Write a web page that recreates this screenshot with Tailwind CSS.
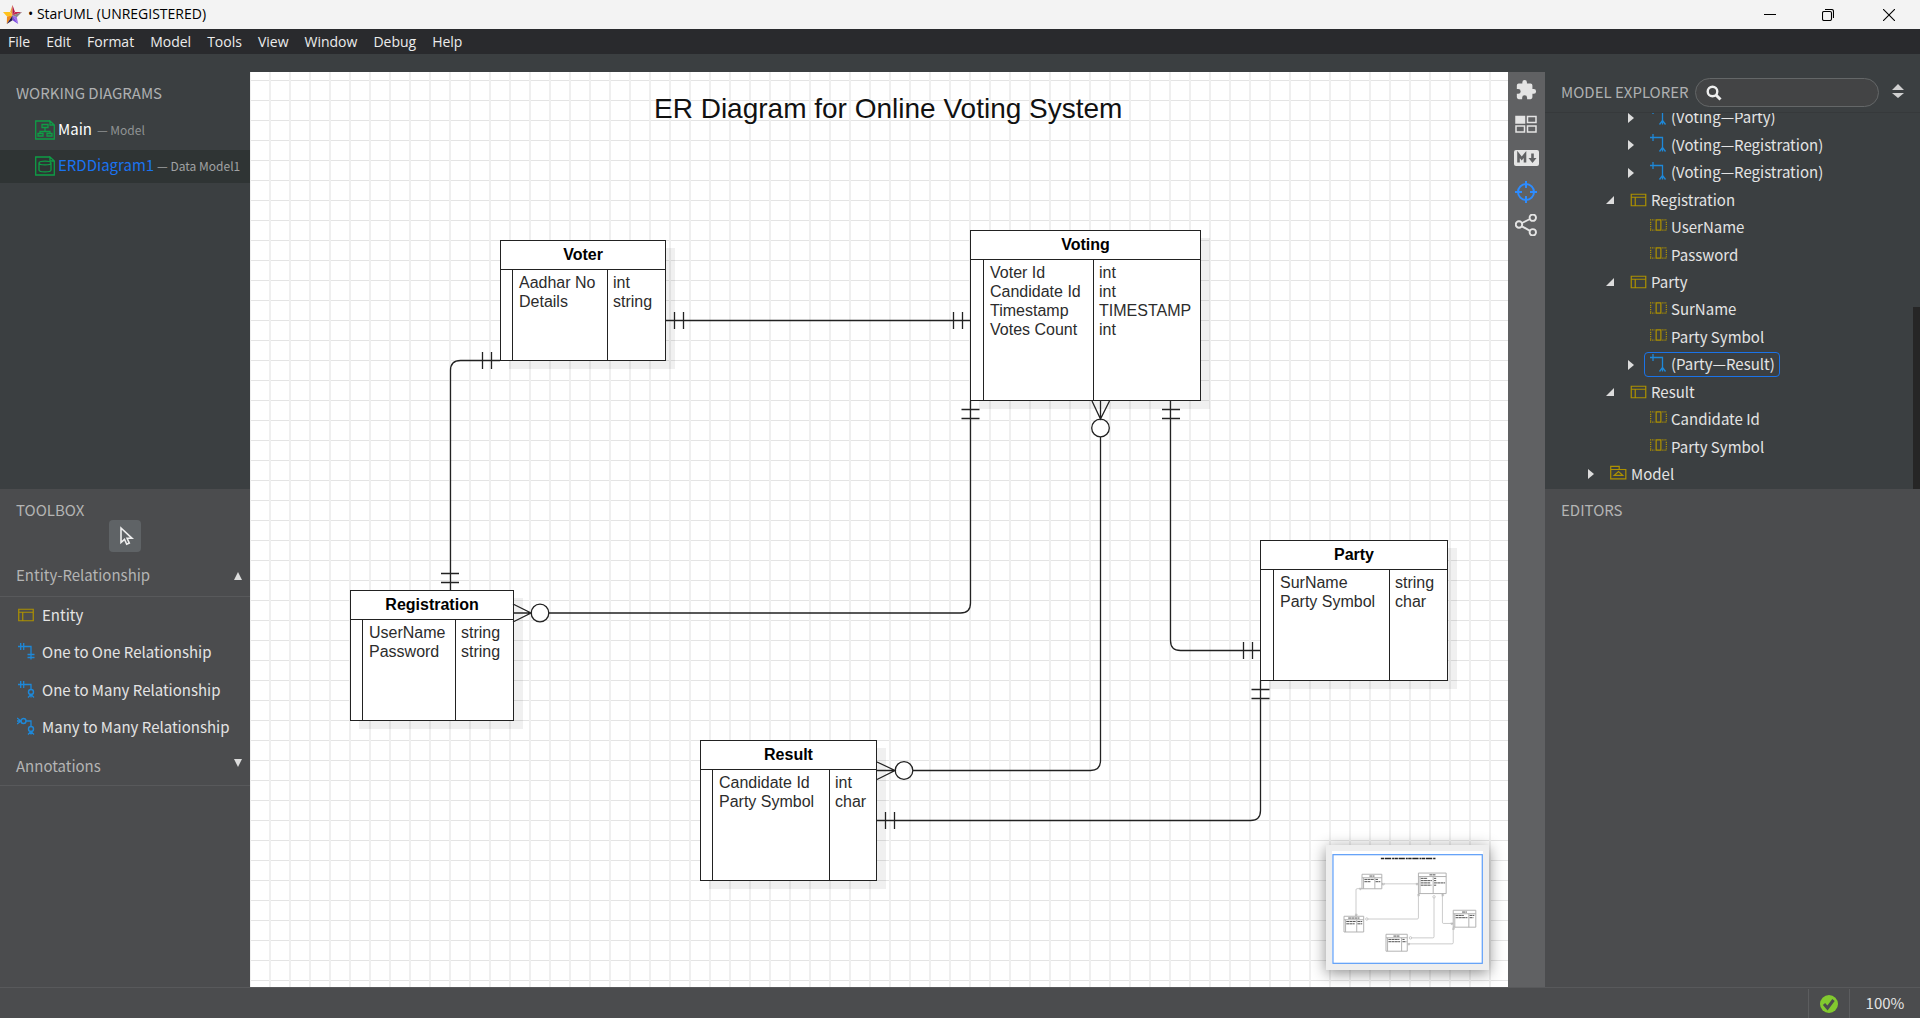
<!DOCTYPE html>
<html lang="en">
<head>
<meta charset="utf-8">
<title>StarUML (UNREGISTERED)</title>
<script src="https://cdn.jsdelivr.net/npm/@tailwindcss/browser@4"></script>
</head>
<body class="flex h-screen flex-col overflow-hidden bg-[#3b3f41] font-['Noto_Sans_CJK_SC',sans-serif] text-[15px] text-[#e4e4e4]">

<svg class="hidden" aria-hidden="true">
  <symbol id="entity" viewBox="0 0 16 16"><path d="M.75 2.25h14.5v11.5H.75zM.75 5.25h14.5M4.75 5.25v8.5" fill="none" stroke="#ad9100" stroke-width="1.2"/></symbol>
  <symbol id="column" viewBox="0 0 18 16"><path d="M6.500 2.500h5v11h-5z" fill="none" stroke="#ad9100" stroke-width="1.300"/><path d="M0 2.500h5M0 13.500h5M.7 4.500v8M13 2.500h5M13 13.500h5M17.300 4.500v8" fill="none" stroke="#ad9100" stroke-width="1.300" stroke-dasharray="1.300 1"/></symbol>
  <symbol id="rel" viewBox="0 0 17 20"><path d="M0 4.500h12.500v14M3 1v7M12.500 14.500l-3 4M12.500 14.500l3 4" fill="none" stroke="#1e88d8" stroke-width="1.300"/></symbol>
  <symbol id="one-one" viewBox="0 0 18 18"><path d="M1 4.500h13v13M3.700 1v7M6.700 1v7M10.500 12.500h7M10.500 15.500h7" fill="none" stroke="#1e88d8" stroke-width="1.300"/></symbol>
  <symbol id="one-many" viewBox="0 0 18 18"><path d="M1 4.500h13v5M3.700 1v7M6.700 1v7M11 17.500l3-3 3 3M14 14.500v3" fill="none" stroke="#1e88d8" stroke-width="1.300"/><circle cx="14" cy="12" r="2.500" fill="none" stroke="#1e88d8" stroke-width="1.400"/></symbol>
  <symbol id="many-many" viewBox="0 0 18 18"><path d="M9 4h5v5M0 1l4 3-4 3M0 4h4M11 17.500l3-3 3 3M14 14.500v3" fill="none" stroke="#1e88d8" stroke-width="1.300"/><circle cx="14" cy="12" r="2.500" fill="none" stroke="#1e88d8" stroke-width="1.400"/><circle cx="6.500" cy="4" r="2.500" fill="none" stroke="#1e88d8" stroke-width="1.400"/></symbol>
  <symbol id="closed" viewBox="0 0 8 10"><path d="M1 0l6 5-6 5z" fill="#dcdcdc"/></symbol>
  <symbol id="open" viewBox="0 0 8 8"><path d="M8 0v8H0z" fill="#dcdcdc"/></symbol>
  <symbol id="model" viewBox="0 0 18 16"><path d="M.75 14.200V1h9v3.300h7v9.900zM.75 4.300h9" fill="none" stroke="#ad9100" stroke-width="1.300"/><path d="M4.500 10.500h9l-4.500-4z" fill="none" stroke="#ad9100" stroke-width="1.300"/></symbol>
</svg>

<header class="flex h-[29px] shrink-0 items-center bg-[#f3f3f3] pl-[3px] font-['Open_Sans',sans-serif] text-sm text-black">
  <svg class="h-[19px] w-[19px]" viewBox="0 0 20 20"><path d="M10 0l-2.400 7L10 11z" fill="#e8a33a"/><path d="M10 0l2.500 7L10 11z" fill="#b5174b"/><path d="M0 7.300h7.500L10 11l-5.800 1z" fill="#ffc21c"/><path d="M4.200 12L10 11l-6 9z" fill="#f08a1c"/><path d="M20 7.300h-7.500L10 11z" fill="#c3284f"/><path d="M20 7.300L10 11l4.500 2z" fill="#888"/><path d="M14.500 12.500L10 11l6 9z" fill="#9d6be8"/><path d="M10 11l6 9-6-4z" fill="#7a4ae0"/><path d="M10 11l-6 9 6-4z" fill="#271c50"/></svg>
  <h1 class="ml-1.5 flex-1 pb-px whitespace-nowrap">• StarUML (UNREGISTERED)</h1>
  <div class="flex h-full">
    <button aria-label="Minimize" class="flex w-[58px] items-center justify-center"><svg class="h-3 w-3" viewBox="0 0 12 12"><path d="M0 5.500h12" stroke="#000"/></svg></button>
    <button aria-label="Restore" class="flex w-[58px] items-center justify-center"><svg class="h-3 w-3" viewBox="0 0 12 12" fill="none" stroke="#000" stroke-width="1.100"><rect x=".5" y="2.500" width="9" height="9" rx="1.500"/><path d="M3 .5h6.500a2 2 0 0 1 2 2V9"/></svg></button>
    <button aria-label="Close" class="flex w-[63px] items-center justify-center"><svg class="h-3 w-3" viewBox="0 0 12 12"><path d="M0 0l12 12M12 0L0 12" stroke="#000" stroke-width="1.100"/></svg></button>
  </div>
</header>

<nav class="flex h-[25px] shrink-0 items-center gap-4 bg-[#292a2d] pl-2 font-['Open_Sans',sans-serif] text-sm text-[#ececec]">
  <button>File</button><button>Edit</button><button>Format</button><button>Model</button><button>Tools</button><button>View</button><button>Window</button><button>Debug</button><button>Help</button>
</nav>

<div class="flex min-h-0 flex-1 pt-[18px]">
  <aside class="flex w-[250px] shrink-0 flex-col">
    <section class="h-[417px] shrink-0">
      <h2 class="flex h-[42px] items-center pl-4 text-[#aeb0b1]">WORKING DIAGRAMS</h2>
      <ul class="flex flex-col gap-[3px]">
        <li class="flex h-[33px] items-center gap-[3px] pb-0.5 pl-[35px]">
          <svg class="h-5 w-5 shrink-0" viewBox="0 0 20 20" fill="none" stroke="#0f9d46" stroke-width="1.300"><path d="M15 1H.7v18h18.600V5M15 1v4h4.300zM7 4.500h6v3H7zM10 7.500v4M5 13.500v-2h10v2M3 13.500h5v2.500H3zM12 13.500h5v2.500h-5z"/></svg>
          <span class="text-white">Main</span><span class="ml-0.5 text-xs text-[#909394]">— Model</span>
        </li>
        <li class="flex h-[33px] items-center gap-[3px] whitespace-nowrap bg-[#2f3434] pb-0.5 pl-[35px]">
          <svg class="h-5 w-5 shrink-0" viewBox="0 0 20 20" fill="none" stroke="#0f9d46" stroke-width="1.300"><path d="M15 1H.7v18h18.600V5M15 1v4h4.300z"/><path d="M4 7c0-2.500 12-2.500 12 0s-12 2.500-12 0v7c0 2.500 12 2.500 12 0V7"/></svg>
          <span class="text-[#1a73f0]">ERDDiagram1</span><span class="text-xs text-[#a0a2a3]">— Data Model1</span>
        </li>
      </ul>
    </section>
    <section class="flex-1 bg-[#4b4c4e]">
      <h2 class="flex h-[31px] items-end pl-4 leading-5 text-[#b4b4b4]">TOOLBOX</h2>
      <button aria-label="Select" class="mx-auto flex h-8 w-8 items-center justify-center rounded bg-[#5f6366]">
        <svg class="h-5 w-5" viewBox="0 0 20 20" fill="none" stroke="#eee" stroke-width="1.600"><path d="M6 2v14.500l3.500-3.200 2.200 5 2.600-1.200-2.200-4.800H17z"/></svg>
      </button>
      <button class="mt-[7px] flex h-[38px] w-full items-center justify-between border-b border-[#58595b] pr-2 pb-1 pl-4 text-[#b4b4b4]">Entity-Relationship<svg class="h-2 w-2" viewBox="0 0 8 8"><path d="M4 0l4 8H0z" fill="#dcdcdc"/></svg></button>
      <ul class="grid h-[150px] grid-rows-4">
        <li class="flex items-center gap-2 pb-0.5 pl-[18px]"><svg class="h-4 w-4"><use href="#entity"/></svg>Entity</li>
        <li class="flex items-center gap-[7px] pb-0.5 pl-[17px]"><svg class="mb-0.5 h-[18px] w-[18px]"><use href="#one-one"/></svg>One to One Relationship</li>
        <li class="flex items-center gap-[7px] pb-0.5 pl-[17px]"><svg class="mb-0.5 h-[18px] w-[18px]"><use href="#one-many"/></svg>One to Many Relationship</li>
        <li class="flex items-center gap-[7px] pb-0.5 pl-[17px]"><svg class="mb-0.5 h-[18px] w-[18px]"><use href="#many-many"/></svg>Many to Many Relationship</li>
      </ul>
      <button class="flex h-[39px] w-full items-center justify-between border-b border-[#58595b] pr-2 pl-4 text-[#b4b4b4]">Annotations<svg class="mb-1.5 h-2 w-2" viewBox="0 0 8 8"><path d="M4 8l4-8H0z" fill="#dcdcdc"/></svg></button>
    </section>
  </aside>

  <main class="relative min-w-0 flex-1 overflow-hidden bg-white bg-[linear-gradient(to_right,#efefef_2px,transparent_2px),linear-gradient(to_bottom,#e4e4e4_1px,transparent_1px)] bg-[size:20px_20px] bg-[position:19px_8px] font-['Liberation_Sans',Arial,sans-serif] text-base text-[#2c2c2c]">
    <h2 class="absolute top-[21px] left-[404px] whitespace-nowrap text-[28px] leading-8 text-[#111]">ER Diagram for Online Voting System</h2>

    <article class="absolute top-[168px] left-[250px] flex h-[121px] w-[166px] flex-col border border-[#222] bg-white shadow-[9px_8px_0_#0000000f]">
      <h3 class="flex h-[29px] shrink-0 items-center justify-center border-b border-[#222] font-bold text-black">Voter</h3>
      <div class="flex flex-1 leading-[19px]"><div class="w-[12px] border-r border-[#222]"></div><div class="w-[95px] border-r border-[#222] pt-[3px] pl-1.5">Aadhar No<br>Details</div><div class="pt-[3px] pl-[5px]">int<br>string</div></div>
    </article>
    <article class="absolute top-[158px] left-[720px] flex h-[171px] w-[231px] flex-col border border-[#222] bg-white shadow-[9px_8px_0_#0000000f]">
      <h3 class="flex h-[29px] shrink-0 items-center justify-center border-b border-[#222] font-bold text-black">Voting</h3>
      <div class="flex flex-1 leading-[19px]"><div class="w-[13px] border-r border-[#222]"></div><div class="w-[110px] border-r border-[#222] pt-[3px] pl-1.5">Voter Id<br>Candidate Id<br>Timestamp<br>Votes Count</div><div class="pt-[3px] pl-[5px]">int<br>int<br>TIMESTAMP<br>int</div></div>
    </article>
    <article class="absolute top-[518px] left-[100px] flex h-[131px] w-[164px] flex-col border border-[#222] bg-white shadow-[9px_8px_0_#0000000f]">
      <h3 class="flex h-[29px] shrink-0 items-center justify-center border-b border-[#222] font-bold text-black">Registration</h3>
      <div class="flex flex-1 leading-[19px]"><div class="w-[12px] border-r border-[#222]"></div><div class="w-[93px] border-r border-[#222] pt-[3px] pl-1.5">UserName<br>Password</div><div class="pt-[3px] pl-[5px]">string<br>string</div></div>
    </article>
    <article class="absolute top-[668px] left-[450px] flex h-[141px] w-[177px] flex-col border border-[#222] bg-white shadow-[9px_8px_0_#0000000f]">
      <h3 class="flex h-[29px] shrink-0 items-center justify-center border-b border-[#222] font-bold text-black">Result</h3>
      <div class="flex flex-1 leading-[19px]"><div class="w-[12px] border-r border-[#222]"></div><div class="w-[117px] border-r border-[#222] pt-[3px] pl-1.5">Candidate Id<br>Party Symbol</div><div class="pt-[3px] pl-[5px]">int<br>char</div></div>
    </article>
    <article class="absolute top-[468px] left-[1010px] flex h-[141px] w-[188px] flex-col border border-[#222] bg-white shadow-[9px_8px_0_#0000000f]">
      <h3 class="flex h-[29px] shrink-0 items-center justify-center border-b border-[#222] font-bold text-black">Party</h3>
      <div class="flex flex-1 leading-[19px]"><div class="w-[13px] border-r border-[#222]"></div><div class="w-[116px] border-r border-[#222] pt-[3px] pl-1.5">SurName<br>Party Symbol</div><div class="pt-[3px] pl-[5px]">string<br>char</div></div>
    </article>

    <svg class="pointer-events-none absolute inset-0 h-full w-full" fill="none" stroke="#222" stroke-width="1.300">
      <g id="connectors">
        <path d="M415 248.500H720M424.500 240v17M433.500 240v17M703.500 240v17M712.500 240v17"/>
        <path d="M250 288.500H210.500q-10 0-10 10V518M232.500 280v17M241.500 280v17M191 501.500h18M191 510.500h18"/>
        <path d="M720.500 329V531q0 10-10 10H299M711.500 337.500h18M711.500 346.500h18M263 532l18 9-18 9M263 541h18"/>
        <circle cx="290" cy="541" r="8.800"/>
        <path d="M850.500 365V688.500q0 10-10 10H663M842 329l8.500 18 9-18M850.500 329v18M627 690l18 8.500-18 9M627 698.500h18"/>
        <circle cx="850.500" cy="356" r="8.800"/><circle cx="654" cy="698.500" r="8.800"/>
        <path d="M920.500 329V568.500q0 10 10 10H1010M912 337.500h18M912 346.500h18M993.500 570v17M1002.500 570v17"/>
        <path d="M1010.500 609V738.500q0 10-10 10H627M1001.500 617.500h18M1001.500 626.500h18M635.500 740v17M644.500 740v17"/>
      </g>
    </svg>

    <div class="absolute right-[19px] bottom-[17px] border-[6px] border-[#eee] bg-white pt-[3px] shadow-[0_3px_14px_#00000073]">
      <svg class="block h-[110px] w-[151px]" viewBox="0 0 1258 915" fill="none">
        <g stroke="#aaa" stroke-width="5">
          <path d="M415 248H720M250 288H210q-10 0-10 10V518M720 329V531q0 10-10 10H299M850 365V688q0 10-10 10H663M920 329V568q0 10 10 10H1010M1010 609V738q0 10-10 10H627"/>
          <path d="M420 240v17h14v-17M703 240v17h10v-17M232 280v17h10v-17M191 501h18v10h-18M711 337h18v10h-18M912 337h18v10h-18M993 570v17h10v-17M1001 617h18v10h-18M635 740v17h10v-17"/>
          <circle cx="290" cy="541" r="10"/><circle cx="850" cy="356" r="10"/><circle cx="654" cy="698" r="10"/>
        </g>
        <path stroke="#b0b0b0" stroke-width="8" d="M250 168h165v121H250zM250 197h165M263 197v92M357 197v92M720 158h231v171H720zM720 187h231M733 187v142M843 187v142M100 518h164v131H100zM100 547h164M113 547v102M206 547v102M450 668h177v141H450zM450 697h177M463 697v112M580 697v112M1010 468h188v141h-188zM1010 497h188M1023 497v112M1140 497v112"/>
        <path stroke="#333" stroke-width="7" stroke-dasharray="24 3" d="M312 183h42M270 211h80M270 230h50M363 211h20M363 230h40M812 173h50M740 202h55M740 221h92M740 240h80M740 259h88M850 202h18M850 221h18M850 240h92M850 259h18M135 533h94M119 562h78M119 581h70M212 562h40M212 581h40M512 683h50M470 711h92M470 730h98M587 711h18M587 730h32M1084 483h40M1030 511h68M1030 530h98M1146 511h40M1146 530h32"/>
        <path stroke="#222" stroke-width="13" stroke-dasharray="28 6 52 8 16 4" d="M407 37h459"/>
        <rect x="8" y="5" width="1244" height="905" stroke="#5a9cf8" stroke-width="10"/>
      </svg>
    </div>
  </main>

  <div class="flex w-[37px] shrink-0 flex-col items-center gap-3 bg-[#606163] pt-[7px] pr-px text-[#e4e4e4]">
    <button aria-label="Extensions" class="h-[22px] w-[22px]"><svg viewBox="0 0 24 24" fill="currentColor"><path d="M20.500 11H19V7a2 2 0 0 0-2-2h-4V3.500a2.500 2.500 0 0 0-5 0V5H4a2 2 0 0 0-2 2v3.800h1.500a2.700 2.700 0 0 1 0 5.400H2V20a2 2 0 0 0 2 2h3.800v-1.500a2.700 2.700 0 0 1 5.400 0V22H17a2 2 0 0 0 2-2v-4h1.500a2.500 2.500 0 0 0 0-5z"/></svg></button>
    <button aria-label="Diagram thumbnails" class="h-[22px] w-[22px]"><svg viewBox="0 0 22 22" fill="none" stroke="currentColor" stroke-width="1.500"><path fill="currentColor" d="M1 3.500h8.500V10H1z"/><path d="M12.500 3.500H21V9.500h-8.500zM1 13h8.500v6H1zM12.500 13H21v6h-8.500z"/></svg></button>
    <button aria-label="Documentation" class="h-[22px] w-[25px]"><svg viewBox="0 0 25 22"><rect x="0" y="3" width="25" height="16" rx="2" fill="currentColor"/><path d="M4.500 15.500v-8l3.200 4 3.300-4v8M18.500 6.500v5" fill="none" stroke="#606163" stroke-width="2.600"/><path d="M14.500 11h8l-4 5z" fill="#606163"/></svg></button>
    <button aria-label="Navigator" class="h-[22px] w-[22px] text-[#2d8cff]"><svg viewBox="0 0 22 22" fill="none" stroke="currentColor" stroke-width="2"><circle cx="11" cy="11" r="8"/><path d="M11 0v7M11 15v7M0 11h7M15 11h7"/></svg></button>
    <button aria-label="Relationships" class="-mt-px h-[22px] w-[22px]"><svg viewBox="0 0 22 22" fill="none" stroke="currentColor" stroke-width="1.900"><circle cx="4" cy="10.500" r="3.200"/><circle cx="17.800" cy="3.700" r="3.200"/><circle cx="17.800" cy="18.300" r="3.200"/><path d="M7 9l8-4M7 12.300l8 4.500"/></svg></button>
  </div>

  <aside class="flex min-h-0 w-[375px] shrink-0 flex-col">
    <div class="flex h-[41px] shrink-0 items-center border-b border-[#36393b] px-4">
      <h2 class="flex-1 whitespace-nowrap text-[#aeb0b1]">MODEL EXPLORER</h2>
      <label class="relative">
        <svg class="absolute top-[7px] left-[11px] h-4 w-4" viewBox="0 0 16 16" fill="none" stroke="#eee"><circle cx="6.500" cy="6.500" r="4.800" stroke-width="2.400"/><path d="M10 10l4.500 4.500" stroke-width="3"/></svg>
        <input aria-label="Search" type="search" class="block h-[29px] w-[184px] rounded-full border border-[#646768] bg-[#434445] pl-8 outline-none">
      </label>
      <button aria-label="Sort" class="ml-[13px] h-4 w-3"><svg viewBox="0 0 12 16" fill="#d0d0d0"><path d="M6 0l6 6H0zM6 14l6-5H0z"/></svg></button>
    </div>
    <div class="flex h-[376px] shrink-0 overflow-hidden">
      <ul class="grid h-[384px] flex-1 grid-rows-14 self-end whitespace-nowrap [&>li]:pb-0.5">
        <li class="flex items-center pl-[82px]"><svg class="mr-[15px] h-[10px] w-2"><use href="#closed"/></svg><svg class="mr-1 mb-1 h-5 w-[17px]"><use href="#rel"/></svg>(Voting—Party)</li>
        <li class="flex items-center pl-[82px]"><svg class="mr-[15px] h-[10px] w-2"><use href="#closed"/></svg><svg class="mr-1 mb-1 h-5 w-[17px]"><use href="#rel"/></svg>(Voting—Registration)</li>
        <li class="flex items-center pl-[82px]"><svg class="mr-[15px] h-[10px] w-2"><use href="#closed"/></svg><svg class="mr-1 mb-1 h-5 w-[17px]"><use href="#rel"/></svg>(Voting—Registration)</li>
        <li class="flex items-center pl-[61px]"><svg class="mr-4 h-2 w-2"><use href="#open"/></svg><svg class="mr-1 h-4 w-[17px]"><use href="#entity"/></svg>Registration</li>
        <li class="flex items-center pl-[105px]"><svg class="mr-1 mb-1 h-4 w-[17px]"><use href="#column"/></svg>UserName</li>
        <li class="flex items-center pl-[105px]"><svg class="mr-1 mb-1 h-4 w-[17px]"><use href="#column"/></svg>Password</li>
        <li class="flex items-center pl-[61px]"><svg class="mr-4 h-2 w-2"><use href="#open"/></svg><svg class="mr-1 h-4 w-[17px]"><use href="#entity"/></svg>Party</li>
        <li class="flex items-center pl-[105px]"><svg class="mr-1 mb-1 h-4 w-[17px]"><use href="#column"/></svg>SurName</li>
        <li class="flex items-center pl-[105px]"><svg class="mr-1 mb-1 h-4 w-[17px]"><use href="#column"/></svg>Party Symbol</li>
        <li class="flex items-center pl-[82px]"><svg class="mr-[9px] h-[10px] w-2"><use href="#closed"/></svg><span class="flex h-[25px] items-center rounded border border-[#1a73e8] pr-1 pl-[5px]"><svg class="mr-1 mb-1 h-5 w-[17px]"><use href="#rel"/></svg>(Party—Result)</span></li>
        <li class="flex items-center pl-[61px]"><svg class="mr-4 h-2 w-2"><use href="#open"/></svg><svg class="mr-1 h-4 w-[17px]"><use href="#entity"/></svg>Result</li>
        <li class="flex items-center pl-[105px]"><svg class="mr-1 mb-1 h-4 w-[17px]"><use href="#column"/></svg>Candidate Id</li>
        <li class="flex items-center pl-[105px]"><svg class="mr-1 mb-1 h-4 w-[17px]"><use href="#column"/></svg>Party Symbol</li>
        <li class="flex items-center pl-[42px]"><svg class="mr-[15px] h-[10px] w-2"><use href="#closed"/></svg><svg class="mr-1 mb-[2px] h-4 w-[17px]"><use href="#model"/></svg>Model</li>
      </ul>
      <div class="h-[182px] w-[7px] self-end bg-[#262626]"></div>
    </div>
    <section class="flex-1 bg-[#4b4c4e]">
      <h2 class="flex h-[43px] items-center pl-4 text-[#b4b4b4]">EDITORS</h2>
    </section>
  </aside>
</div>

<footer class="flex h-[31px] shrink-0 items-stretch justify-end border-t border-[#58595b] bg-[#4b4c4e]">
  <div class="mt-px flex w-[41px] items-center justify-center border-l border-[#5c5d5f]"><svg class="h-[18px] w-[18px]" viewBox="0 0 18 18"><circle cx="9" cy="9" r="9" fill="#82c92f"/><path d="M4 9l3.500 4L13.500 5" fill="none" stroke="#4b4c4e" stroke-width="3"/></svg></div>
  <button class="mt-px flex w-[71px] items-center justify-center border-l border-[#5c5d5f]">100%</button>
</footer>
</body>
</html>
